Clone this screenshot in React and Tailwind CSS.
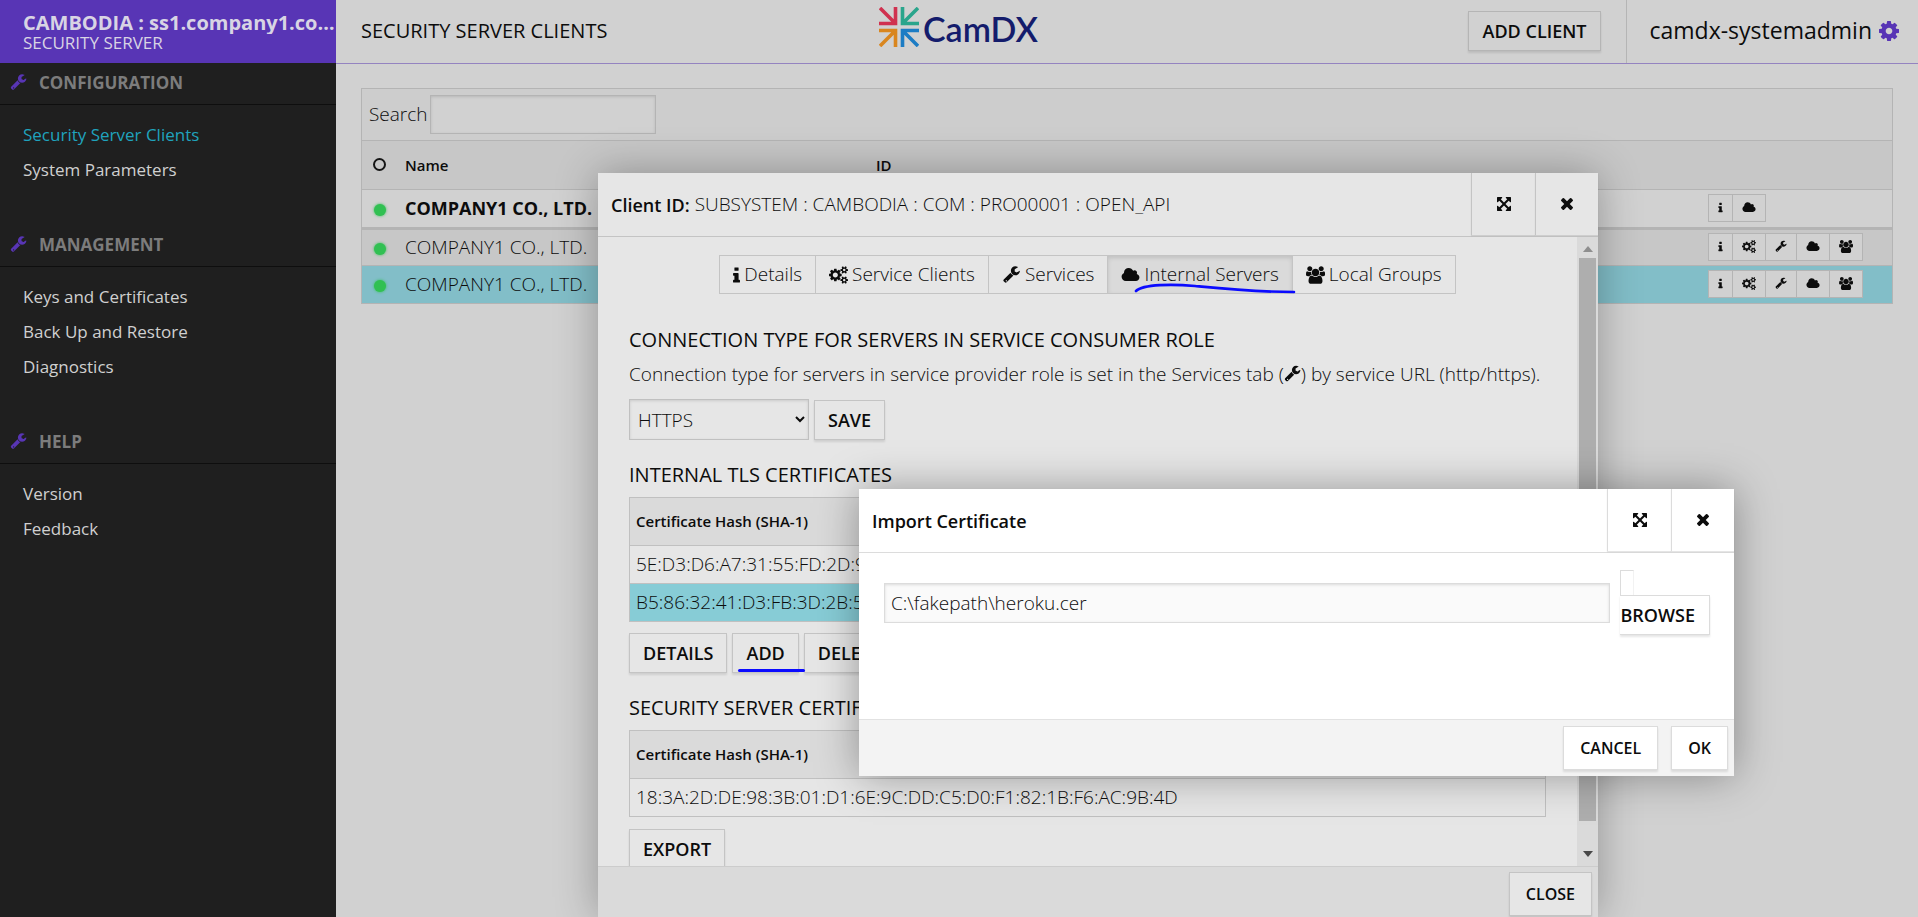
import React from "react";

const ICONS = {
  wrench: {
    box: "0 0 1792 1792",
    d: "M448 1472q0-26-19-45t-45-19-45 19-19 45 19 45 45 19 45-19 19-45zM1092 948l-682 682q-37 37-90 37-52 0-91-37l-106-108q-38-36-38-90 0-53 38-91l681-681q39 98 114.5 173.5t173.5 114.5zM1726 513q0 39-23 106-47 134-164.5 217.5t-258.5 83.5q-185 0-316.5-131.5t-131.5-316.5 131.5-316.5 316.5-131.5q58 0 121.5 16.5t107.5 46.5q16 11 16 28t-16 28l-293 169v224l193 107q5-3 79-48.5t135.5-81 70.5-35.5q15 0 23.5 10t8.5 25z",
  },
  cloud: {
    box: "0 0 2048 1792",
    d: "M1984 1152q0 159-112.5 271.5t-271.5 112.5h-1088q-185 0-316.5-131.5t-131.5-316.5q0-132 71-241.5t187-163.5q-2-28-2-43 0-212 150-362t362-150q158 0 286.5 88t187.5 230q70-62 166-62 106 0 181 75t75 181q0 75-41 138 129 30 213 134.5t84 239.5z",
  },
  gear: {
    box: "128 128 1536 1536",
    d: "M1152 896q0-106-75-181t-181-75-181 75-75 181 75 181 181 75 181-75 75-181zM1664 787v222q0 12-8 23t-20 13l-185 28q-19 54-39 91 35 50 107 138 10 12 10 25t-9 23q-27 37-99 108t-94 71q-12 0-26-9l-138-108q-44 23-91 38-16 136-29 186-7 28-36 28h-222q-14 0-24.5-8.5t-11.5-21.5l-28-184q-49-16-90-37l-141 107q-10 9-25 9-14 0-25-11-126-114-165-168-7-10-7-23 0-12 8-23 15-21 51-66.5t54-70.5q-27-50-41-99l-183-27q-13-2-21-12.5t-8-23.5v-222q0-12 8-23t19-13l186-28q14-46 39-92-40-57-107-138-10-12-10-24 0-10 9-23 26-36 98.5-107.5t94.5-71.5q13 0 26 10l138 107q44-23 91-38 16-136 29-186 7-28 36-28h222q14 0 24.5 8.5t11.5 21.5l28 184q49 16 90 37l142-107q9-9 24-9 13 0 25 10 129 119 165 170 7 8 7 22 0 12-8 23-15 21-51 66.5t-54 70.5q26 50 41 98l183 28q13 2 21 12.5t8 23.5z",
  },
  gears: {
    box: "0 0 1920 1792",
    d: "M896 896q0-106-75-181t-181-75-181 75-75 181 75 181 181 75 181-75 75-181zM1664 1408q0-52-38-90t-90-38-90 38-38 90q0 53 37.5 90.5t90.5 37.5 90.5-37.5 37.5-90.5zM1664 384q0-52-38-90t-90-38-90 38-38 90q0 53 37.5 90.5t90.5 37.5 90.5-37.5 37.5-90.5zM1280 805v185q0 10-7 19.5t-16 10.5l-155 24q-11 35-32 76 34 48 90 115 7 10 7 20 0 12-7 19-23 30-82.5 89.5t-78.5 59.5q-11 0-21-7l-115-90q-37 19-77 31-11 108-23 155-7 24-30 24h-186q-11 0-20-7.5t-10-17.5l-23-153q-34-10-75-31l-118 89q-7 7-20 7-11 0-21-8-144-133-144-160 0-9 7-19 10-14 41-53t47-61q-23-44-35-82l-152-24q-10-1-17-9.5t-7-19.5v-185q0-10 7-19.5t16-10.5l155-24q11-35 32-76-34-48-90-115-7-11-7-20 0-12 7-20 22-30 82-89t79-59q11 0 21 7l115 90q34-18 77-32 11-108 23-154 7-24 30-24h186q11 0 20 7.5t10 17.5l23 153q34 10 75 31l118-89q8-7 20-7 11 0 21 8 144 133 144 160 0 9-7 19-12 16-42 54t-45 60q23 48 34 82l152 23q10 2 17 10.5t7 19.5zM1920 1338v140q0 16-149 31-12 27-30 52 51 113 51 138 0 4-4 7-122 71-124 71-8 0-46-47t-52-68q-20 2-30 2t-30-2q-14 21-52 68t-46 47q-2 0-124-71-4-3-4-7 0-25 51-138-18-25-30-52-149-15-149-31v-140q0-16 149-31 13-29 30-52-51-113-51-138 0-4 4-7 4-2 35-20t59-34 30-16q8 0 46 46.5t52 67.5q20-2 30-2t30 2q51-71 92-112l6-2q4 0 124 70 4 3 4 7 0 25-51 138 17 23 30 52 149 15 149 31zM1920 314v140q0 16-149 31-12 27-30 52 51 113 51 138 0 4-4 7-122 71-124 71-8 0-46-47t-52-68q-20 2-30 2t-30-2q-14 21-52 68t-46 47q-2 0-124-71-4-3-4-7 0-25 51-138-18-25-30-52-149-15-149-31v-140q0-16 149-31 13-29 30-52-51-113-51-138 0-4 4-7 4-2 35-20t59-34 30-16q8 0 46 46.5t52 67.5q20-2 30-2t30 2q51-71 92-112l6-2q4 0 124 70 4 3 4 7 0 25-51 138 17 23 30 52 149 15 149 31z",
  },
  users: {
    box: "0 0 1920 1792",
    d: "M593 896q-162 5-265 128h-134q-82 0-138-40.5t-56-118.5q0-353 124-353 6 0 43.5 21t97.5 42.5 119 21.5q67 0 133-23-5 37-5 66 0 159 93 256zM1664 1533q0 120-73 189.5t-194 69.5h-874q-121 0-194-69.5t-73-189.5q0-53 3.5-103.5t14-109 26.5-108.5 43-97.5 62-81 85.5-53.5 111.5-20q10 0 43 21.5t73 48 107 48 135 21.5 135-21.5 107-48 73-48 43-21.5q61 0 111.5 20t85.5 53.5 62 81 43 97.5 26.5 108.5 14 109 3.5 103.5zM640 256q0 106-75 181t-181 75-181-75-75-181 75-181 181-75 181 75 75 181zM1344 640q0 159-112.5 271.5t-271.5 112.5-271.5-112.5-112.5-271.5 112.5-271.5 271.5-112.5 271.5 112.5 112.5 271.5zM1920 865q0 78-56 118.5t-138 40.5h-134q-103-123-265-128 93-97 93-256 0-29-5-66 66 23 133 23 59 0 119-21.5t97.5-42.5 43.5-21q124 0 124 353zM1792 256q0 106-75 181t-181 75-181-75-75-181 75-181 181-75 181 75 75 181z",
  },
  info: {
    box: "576 0 640 1664",
    d: "M1216 1344v128q0 26-19 45t-45 19h-512q-26 0-45-19t-19-45v-128q0-26 19-45t45-19h64v-384h-64q-26 0-45-19t-19-45v-128q0-26 19-45t45-19h384q26 0 45 19t19 45v576h64q26 0 45 19t19 45zM1088 192v192q0 26-19 45t-45 19h-256q-26 0-45-19t-19-45v-192q0-26 19-45t45-19h256q26 0 45 19t19 45z",
  },
  close: {
    box: "302 366 1188 1188",
    d: "M1490 1322q0 40-28 68l-136 136q-28 28-68 28t-68-28l-294-294-294 294q-28 28-68 28t-68-28l-136-136q-28-28-28-68t28-68l294-294-294-294q-28-28-28-68t28-68l136-136q28-28 68-28t68 28l294 294 294-294q28-28 68-28t68 28l136 136q28 28 28 68t-28 68l-294 294 294 294q28 28 28 68z",
  },
  expand: {
    box: "128 128 1536 1536",
    d: "M1411 541l-355 355 355 355 144-144q29-31 70-14 39 17 39 59v448q0 26-19 45t-45 19h-448q-42 0-59-40-17-39 14-69l144-144-355-355-355 355 144 144q31 30 14 69-17 40-59 40h-448q-26 0-45-19t-19-45v-448q0-42 40-59 39-17 69 14l144 144 355-355-355-355-144 144q-19 19-45 19-12 0-24-5-40-17-40-59v-448q0-26 19-45t45-19h448q42 0 59 40 17 39-14 69l-144 144 355 355 355-355-144-144q-31-30-14-69 17-40 59-40h448q26 0 45 19t19 45v448q0 42-39 59-13 5-25 5-26 0-45-19z",
  },
};

function Icon({ name, className }) {
  return (
    <svg viewBox={ICONS[name].box} className={className} fill="currentColor" aria-hidden="true">
      <path d={ICONS[name].d} />
    </svg>
  );
}

const NAV = [
  { title: "CONFIGURATION", items: ["Security Server Clients", "System Parameters"] },
  { title: "MANAGEMENT", items: ["Keys and Certificates", "Back Up and Restore", "Diagnostics"] },
  { title: "HELP", items: ["Version", "Feedback"] },
];

function Sidebar() {
  return (
    <aside className="w-[336px] shrink-0 bg-[#1f1f1f]">
      <div className="h-[63px] bg-[#5835b5] pt-3 pl-[23px] text-[#d8d4e4]">
        <div className="truncate text-xl leading-[22px] font-bold">
          CAMBODIA : ss1.company1.company1
        </div>
        <div className="text-[17px] leading-[18px]">SECURITY SERVER</div>
      </div>
      <nav>
        {NAV.map((group) => (
          <section key={group.title} className="mb-[37px]">
            <h2 className="flex h-[42px] items-center gap-3 border-b border-[#0e0e0e] pb-[2px] pl-[10px] text-[17px] font-bold text-[#7c7c7c]">
              <Icon name="wrench" className="h-[17px] w-[17px] text-[#5835b5]" />
              {group.title}
            </h2>
            <ul className="pt-[13px]">
              {group.items.map((item) => (
                <li key={item} className="h-[35px] pl-[23px] text-[17px] leading-[34px]">
                  <a
                    href="#"
                    className={item === "Security Server Clients" ? "text-[#1fa3bd]" : "text-[#d0d0d0]"}
                  >
                    {item}
                  </a>
                </li>
              ))}
            </ul>
          </section>
        ))}
      </nav>
    </aside>
  );
}

function Logo() {
  return (
    <div className="flex h-full items-start gap-1 pt-[7px]">
      <svg viewBox="0 0 40 40" className="h-10 w-10" fill="none" strokeWidth="3.6" aria-hidden="true">
        <path d="M16.500 0V16.500H0M1 1L16 16" stroke="#d0314f" />
        <path d="M23.500 0V16.500H40M39 1L24 16" stroke="#2aa58c" />
        <path d="M16.500 40V23.500H0M1 39L16 24" stroke="#d9861f" />
        <path d="M23.500 40V23.500H40M39 39L24 24" stroke="#1c7cc4" />
      </svg>
      <span className="font-[Lato,sans-serif] text-[34px] leading-[44px] font-semibold text-[#141c6c]">CamDX</span>
    </div>
  );
}

function Header() {
  return (
    <header className="flex h-16 items-center border-b border-[#9483c0] pl-[25px]">
      <h1 className="w-[518px] pb-[2px] text-xl">SECURITY SERVER CLIENTS</h1>
      <Logo />
      <div className="flex h-full flex-1 items-center justify-end">
        <button className="mr-[25px] mb-[2px] h-10 border border-[#b5b5b5] px-[14px] text-lg font-semibold shadow-[0_2px_2px_rgba(0,0,0,0.1)]">
          ADD CLIENT
        </button>
        <div className="flex h-full items-center gap-[7px] border-l border-[#b5b5b5] pr-[19px] pb-[2px] pl-[22px] text-[23px]">
          camdx-systemadmin
          <button aria-label="Settings">
            <Icon name="gear" className="h-5 w-5 text-[#5835b5]" />
          </button>
        </div>
      </div>
    </header>
  );
}

const ACTION_LABELS = {
  info: "Details",
  gears: "Service Clients",
  wrench: "Services",
  cloud: "Internal Servers",
  users: "Local Groups",
};

const ACTION_SIZES = {
  info: "h-[11px] w-[5px]",
  gears: "h-[13px] w-[14px]",
  wrench: "h-[13px] w-[12px]",
  cloud: "h-[13px] w-[14px]",
  users: "h-[13px] w-[14px]",
};

function RowActions({ names }) {
  return (
    <div className="inline-flex h-7 border border-[#b4b4b4] bg-[#d1d1d1] align-middle">
      {names.map((name) => (
        <button
          key={name}
          aria-label={ACTION_LABELS[name]}
          className="flex items-center border-l border-[#b4b4b4] px-[9px] first:border-l-0"
        >
          <Icon name={name} className={ACTION_SIZES[name]} />
        </button>
      ))}
    </div>
  );
}

const ALL_ACTIONS = ["info", "gears", "wrench", "cloud", "users"];
const CLIENTS = [
  { name: "COMPANY1 CO., LTD.", row: "h-[39px] border-b-[3px] text-lg font-bold", actions: ["info", "cloud"] },
  { name: "COMPANY1 CO., LTD.", row: "h-[37px] border-b bg-[#c7c7c7]", actions: ALL_ACTIONS },
  { name: "COMPANY1 CO., LTD.", row: "h-[38px] border-b bg-[#82bec8]", actions: ALL_ACTIONS },
];

function Clients() {
  return (
    <div className="mx-[25px] mt-6 border border-b-0 border-[#b4b4b4]">
      <div className="flex h-[52px] items-center gap-[2px] border-b border-[#b4b4b4] bg-[#cdcdcd] pl-[7px]">
        <label htmlFor="search" className="text-[19px] font-light">
          Search
        </label>
        <input
          id="search"
          className="h-[39px] w-[226px] border border-[#b4b4b4] bg-[#d1d1d1] px-2 shadow-[inset_0_1px_3px_rgba(0,0,0,0.12)]"
        />
      </div>
      <table className="w-full table-fixed border-collapse text-left text-[19px] font-light">
        <colgroup>
          <col className="w-[36px]" />
          <col className="w-[471px]" />
          <col />
          <col className="w-[185px]" />
        </colgroup>
        <thead>
          <tr className="h-12 border-b border-[#b4b4b4] bg-[#c7c7c7] text-[15px]">
            <th className="pl-[11px]">
              <span className="block h-[13px] w-[13px] rounded-full border-2 border-[#151515]" />
            </th>
            <th className="pl-[7px] font-semibold">Name</th>
            <th className="pl-[7px] font-semibold">ID</th>
            <th />
          </tr>
        </thead>
        <tbody>
          {CLIENTS.map((client, i) => (
            <tr key={i} className={`border-[#b4b4b4] ${client.row}`}>
              <td className="pt-1 pl-3">
                <span className="block h-3 w-3 rounded-full bg-[#31c052] shadow-[0_0_3px_#31c052]" />
              </td>
              <td className="pl-[7px]">{client.name}</td>
              <td />
              <td className="pb-[1px] pl-[1px] leading-none">
                <RowActions names={client.actions} />
              </td>
            </tr>
          ))}
        </tbody>
      </table>
    </div>
  );
}

function TitleBar({ children, border }) {
  return (
    <div className={`flex h-16 shrink-0 border-b text-lg ${border}`}>
      <h2 className="flex flex-1 items-center pl-[13px]">{children}</h2>
      <button
        aria-label="Maximize"
        className={`flex h-[62px] w-16 items-center justify-center border-l shadow-[0_1px_1px_rgba(0,0,0,0.1)] ${border}`}
      >
        <Icon name="expand" className="h-[14px] w-[14px]" />
      </button>
      <button
        aria-label="Close"
        className={`flex h-[62px] w-[63px] items-center justify-center border-l shadow-[0_1px_1px_rgba(0,0,0,0.1)] ${border}`}
      >
        <Icon name="close" className="h-3 w-3" />
      </button>
    </div>
  );
}

const TABS = [
  ["info", "Details"],
  ["gears", "Service Clients"],
  ["wrench", "Services"],
  ["cloud", "Internal Servers"],
  ["users", "Local Groups"],
];

function Tabs() {
  return (
    <div role="tablist" className="mx-auto flex h-[39px] w-fit border border-[#c4c4c4] text-[19px] font-light">
      {TABS.map(([icon, label]) => (
        <button
          key={label}
          role="tab"
          aria-selected={icon === "cloud"}
          className={`relative flex items-center gap-1 border-l border-[#c4c4c4] px-[13px] first:border-l-0 ${
            icon === "cloud" ? "bg-[#dadada] shadow-[inset_0_2px_4px_rgba(0,0,0,0.12)]" : ""
          }`}
        >
          <Icon name={icon} className={icon === "info" ? "h-[18px] w-[7px]" : "h-[18px] w-[19px]"} />
          {label}
          {icon === "cloud" && (
            <svg
              viewBox="0 0 164 14"
              className="absolute -bottom-1 left-[25px] z-10 h-[14px] w-[164px]"
              fill="none"
              stroke="#0b0bff"
              strokeWidth="2.600"
              strokeLinecap="round"
              aria-hidden="true"
            >
              <path d="M3 8C10 1 40 1 62 3C92 6 120 9 161 9" />
            </svg>
          )}
        </button>
      ))}
    </div>
  );
}

function PlainButton({ children }) {
  return (
    <button className="h-10 border border-[#c4c4c4] px-[13px] text-lg font-semibold shadow-[0_2px_2px_rgba(0,0,0,0.1)]">
      {children}
    </button>
  );
}

function CertTable({ rows, selected }) {
  return (
    <table className="w-full border-collapse border border-[#c0c0c0] text-left text-[19px] font-light">
      <thead>
        <tr className="h-12 border-b border-[#c0c0c0] bg-[#dadada] text-[15px]">
          <th className="pl-[6px] font-semibold">Certificate Hash (SHA-1)</th>
        </tr>
      </thead>
      <tbody>
        {rows.map((hash, i) => (
          <tr key={hash} className={`h-[38px] border-b border-[#c0c0c0] ${i === selected ? "bg-[#87ccd6]" : ""}`}>
            <td className="pl-[6px]">{hash}</td>
          </tr>
        ))}
      </tbody>
    </table>
  );
}

function ScrollBar() {
  return (
    <div className="flex w-[21px] shrink-0 flex-col items-center bg-[#dadada]" aria-hidden="true">
      <svg viewBox="0 0 10 6" className="mt-[9px] mb-[6px] h-[6px] w-[10px] shrink-0" fill="#8e8e8e">
        <path d="M0 6L5 0L10 6Z" />
      </svg>
      <div className="w-[17px] flex-1 bg-[#aeaeae]" />
      <svg viewBox="0 0 10 6" className="mt-[30px] mb-[9px] h-[6px] w-[10px] shrink-0" fill="#484848">
        <path d="M0 0L5 6L10 0Z" />
      </svg>
    </div>
  );
}

function ClientDialog() {
  return (
    <div
      role="dialog"
      className="absolute top-[173px] bottom-0 left-[598px] flex w-[1000px] flex-col bg-[#e6e6e6] shadow-[0_0_40px_rgba(0,0,0,0.3)]"
    >
      <TitleBar border="border-[#c4c4c4]">
        <span className="font-semibold">Client ID:</span>
        <span className="pl-[5px] text-[19px] font-light">SUBSYSTEM : CAMBODIA : COM : PRO00001 : OPEN_API</span>
      </TitleBar>
      <div className="flex min-h-0 flex-1">
        <div className="min-w-0 flex-1 overflow-hidden pt-[18px] pr-[31px] pl-[31px]">
          <Tabs />
          <h3 className="mt-[31px] text-xl leading-[30px]">CONNECTION TYPE FOR SERVERS IN SERVICE CONSUMER ROLE</h3>
          <p className="mt-1 text-[19px] leading-[30px] font-light">
            Connection type for servers in service provider role is set in the Services tab (
            <Icon name="wrench" className="inline h-[18px] w-[17px] align-[-2px]" />) by service URL (http/https).
          </p>
          <div className="mt-[10px] flex h-[41px] items-end gap-[5px]">
            <select
              aria-label="Connection type"
              className="h-[41px] w-[180px] border border-[#c0c0c0] bg-[#e6e6e6] px-1 text-[19px] font-light shadow-[inset_0_1px_3px_rgba(0,0,0,0.12)]"
            >
              <option>HTTPS</option>
            </select>
            <PlainButton>SAVE</PlainButton>
          </div>
          <h3 className="mt-5 mb-[7px] text-xl leading-[30px]">INTERNAL TLS CERTIFICATES</h3>
          <CertTable rows={["5E:D3:D6:A7:31:55:FD:2D:9", "B5:86:32:41:D3:FB:3D:2B:5"]} selected={1} />
          <div className="mt-[11px] flex gap-[5px]">
            <PlainButton>DETAILS</PlainButton>
            <div className="relative">
              <PlainButton>ADD</PlainButton>
              <span className="absolute -right-[6px] bottom-[1px] z-10 h-[3px] w-[67px] rounded-full bg-[#0b0bff]" />
            </div>
            <PlainButton>DELETE</PlainButton>
          </div>
          <h3 className="mt-5 mb-[7px] text-xl leading-[30px]">SECURITY SERVER CERTIFICATE</h3>
          <CertTable rows={["18:3A:2D:DE:98:3B:01:D1:6E:9C:DD:C5:D0:F1:82:1B:F6:AC:9B:4D"]} />
          <div className="mt-3">
            <PlainButton>EXPORT</PlainButton>
          </div>
        </div>
        <ScrollBar />
      </div>
      <div className="flex h-[51px] shrink-0 justify-end border-t border-[#cccccc] bg-[#dadada] pt-[5px] pr-[6px]">
        <button className="h-11 border border-[#c4c4c4] bg-[#e6e6e6] px-4 text-base font-semibold shadow-[0_2px_2px_rgba(0,0,0,0.1)]">
          CLOSE
        </button>
      </div>
    </div>
  );
}

function ImportDialog() {
  return (
    <div
      role="dialog"
      className="absolute top-[489px] left-[859px] flex w-[875px] flex-col bg-white shadow-[0_0_40px_rgba(0,0,0,0.35)]"
    >
      <TitleBar border="border-[#dcdcdc]">
        <span className="font-semibold">Import Certificate</span>
      </TitleBar>
      <div className="flex h-[166px] pt-[17px] pr-6 pl-[25px]">
        <input
          aria-label="Certificate file"
          readOnly
          defaultValue="C:\fakepath\heroku.cer"
          className="mt-[13px] h-10 min-w-0 flex-1 border border-[#dcdcdc] bg-[#fafafa] px-[6px] text-[19px] font-light shadow-[inset_0_1px_3px_rgba(0,0,0,0.12)]"
        />
        <button className="ml-[10px] flex flex-col items-start text-lg font-semibold">
          <span className="h-[25px] w-[14px] border border-b-0 border-[#dcdcdc] border-r-[#f2f2f2]" />
          <span className="flex h-10 items-center border border-l-0 border-[#dcdcdc] pr-[14px] pl-[1px] shadow-[0_2px_2px_rgba(0,0,0,0.1)]">
            BROWSE
          </span>
        </button>
      </div>
      <div className="flex h-[57px] justify-end gap-[13px] border-t border-[#e2e2e2] bg-[#f3f3f3] pt-[6px] pr-[6px] text-base font-semibold">
        <button className="h-11 border border-[#dcdcdc] bg-white px-4 shadow-[0_2px_2px_rgba(0,0,0,0.1)]">CANCEL</button>
        <button className="h-11 border border-[#dcdcdc] bg-white px-4 shadow-[0_2px_2px_rgba(0,0,0,0.1)]">OK</button>
      </div>
    </div>
  );
}

export default function App() {
  return (
    <div className="relative flex h-screen overflow-hidden bg-[#d1d1d1] font-['Open_Sans',sans-serif] text-[#0c0c0c]">
      <Sidebar />
      <main className="min-w-0 flex-1">
        <Header />
        <Clients />
      </main>
      <ClientDialog />
      <ImportDialog />
    </div>
  );
}
